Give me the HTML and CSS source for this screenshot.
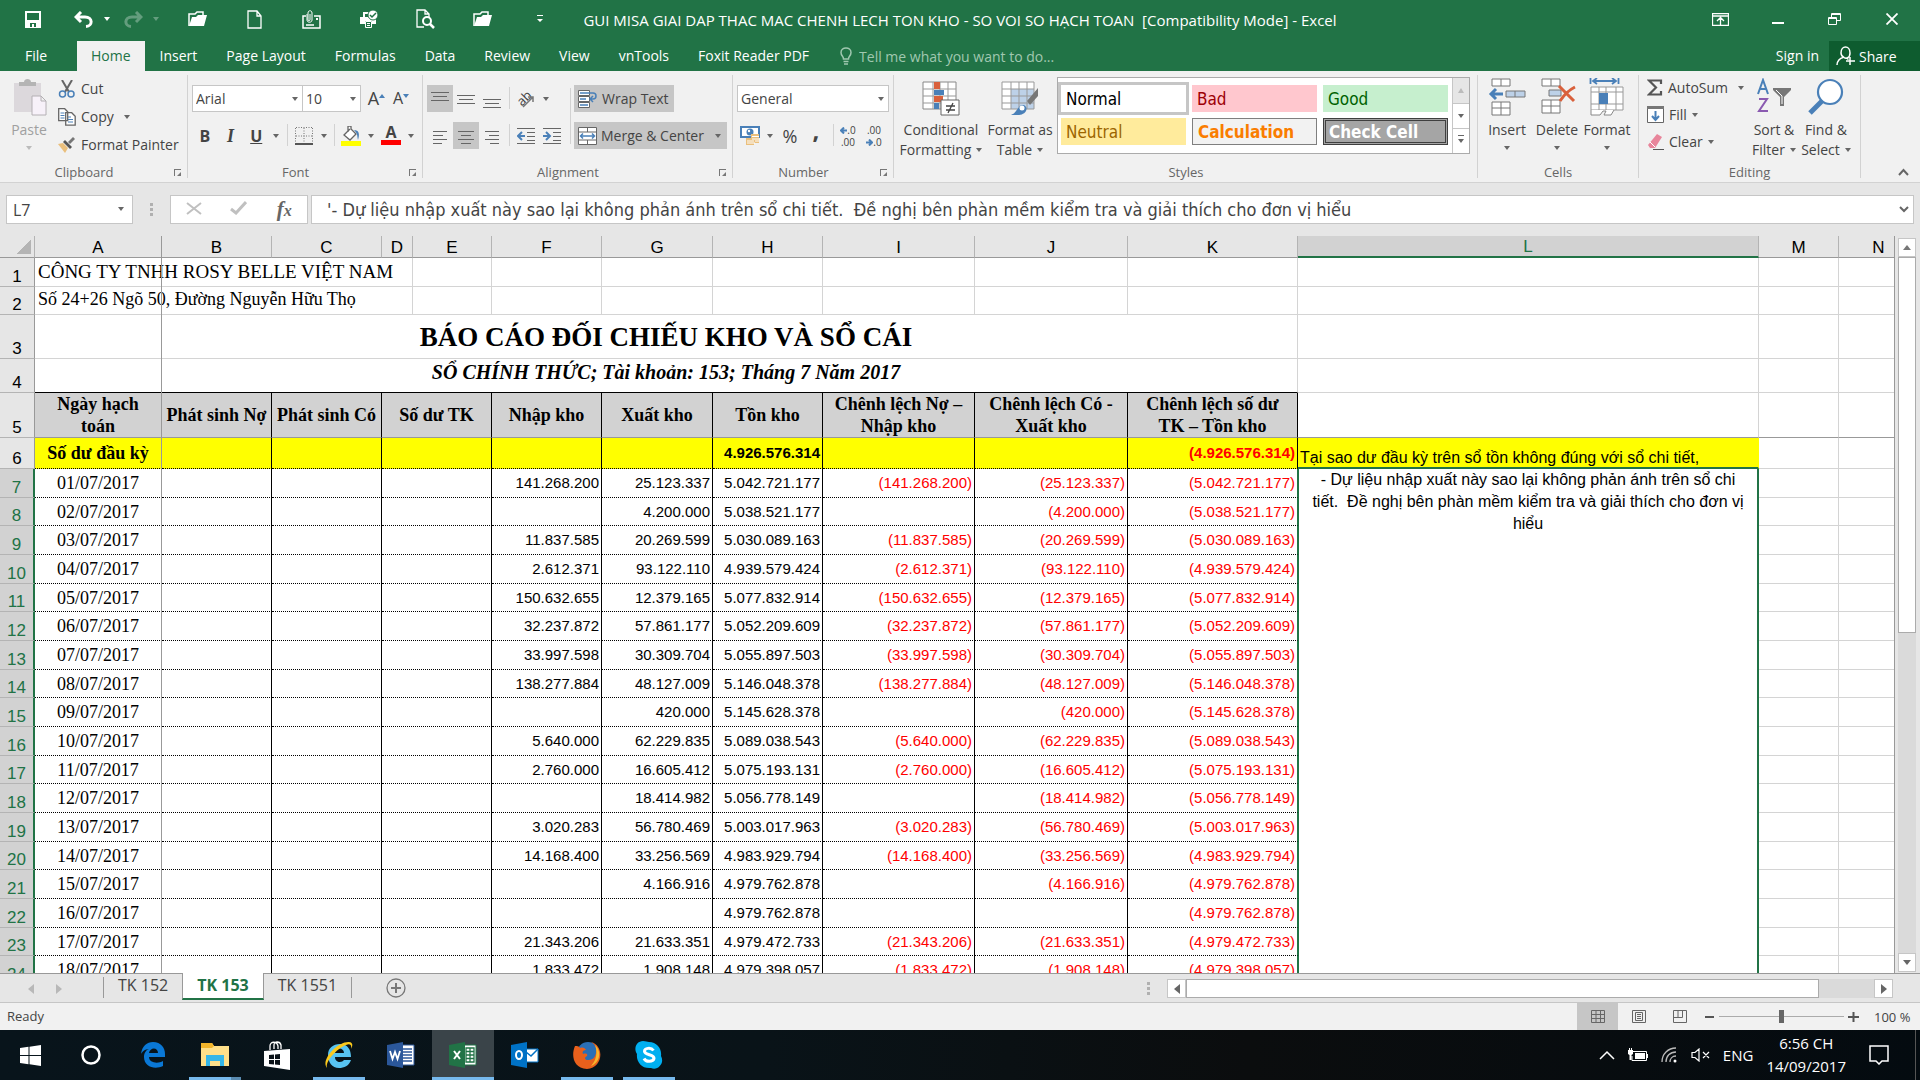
FILE: index.html
```
<!DOCTYPE html>
<html lang="vi">
<head>
	<meta charset="UTF-8">
	<meta name="viewport" content="width=device-width, initial-scale=1.0">
	<title>GUI MISA GIAI DAP THAC MAC CHENH LECH TON KHO - Excel</title>
	<link rel="stylesheet" href="styles.css">
</head>
<body>
	<header class="titlebar">
		<div class="quick">
			<button aria-label="Save"><svg width="16" height="17" viewBox="0 0 16 17"><path d="M1 1h14v15H1z" fill="none" stroke="#fff" stroke-width="2"/><path d="M1 9h14v7H1z" fill="#fff"/><path d="M5 12h6v4H9v-3H7v3H5z" fill="#217346"/></svg></button>
			<button class="wide" aria-label="Undo"><svg width="20" height="17" viewBox="0 0 20 17"><path d="M7 1 2 6l5 5M2 6h9c8 0 8 9 1 9.500" fill="none" stroke="#fff" stroke-width="3"/></svg><i class="caret"></i></button>
			<button class="wide faded" aria-label="Redo"><svg width="20" height="17" viewBox="0 0 20 17"><path d="m13 1 5 5-5 5m5-5H9c-8 0-8 9-1 9.500" fill="none" stroke="#fff" stroke-width="3"/></svg><i class="caret"></i></button>
			<button aria-label="Open"><svg width="19" height="16" viewBox="0 0 19 16"><path d="M1 15V3h6l2-2h6v4" fill="none" stroke="#fff" stroke-width="1.500"/><path d="M4 6h4l2-2h9l-3 11H1z" fill="#fff"/></svg></button>
			<button aria-label="New"><svg width="15" height="19" viewBox="0 0 15 19"><path d="M1 1h9l4 5v12H1zM10 1v5h4" fill="none" stroke="#fff" stroke-width="1.300"/></svg></button>
			<button aria-label="Email"><svg width="19" height="19" viewBox="0 0 19 19"><path d="M4 6H1v12h17V6h-6M4 15h8" fill="none" stroke="#fff" stroke-width="1.500"/><path d="M5 4v6c0 3 5 3 5 0V3c0-3-4-3-4 0v7c0 1 2 1 2 0V4" fill="none" stroke="#fff"/><path d="M14 8h2v2h-2z" fill="#fff"/></svg></button>
			<button aria-label="Quick Print"><svg width="20" height="19" viewBox="0 0 20 19"><path d="M1 7h3V2h6v5h7v7h-4v-3H6v3H1z" fill="#fff"/><path d="M6 4h3v3H6z" fill="#217346"/><circle cx="14" cy="5" r="5" fill="#fff" stroke="#217346"/><path d="m11 5 2 2 4-4" fill="none" stroke="#217346" stroke-width="1.500"/><path d="M6.500 11.500h6v6h-6zM8 13.500h3M8 15.500h3" fill="#217346" stroke="#fff"/></svg></button>
			<button aria-label="Print Preview"><svg width="19" height="20" viewBox="0 0 19 20"><path d="M8 18H1V1h8l4 4v3M9 1v4h4" fill="none" stroke="#fff" stroke-width="1.300"/><circle cx="11" cy="12" r="4" fill="none" stroke="#fff" stroke-width="2"/><path d="m14 15 4 4" stroke="#fff" stroke-width="2.500"/></svg></button>
			<button aria-label="Open Recent"><svg width="19" height="16" viewBox="0 0 19 16"><path d="M1 15V3h6l2-2h6v4" fill="none" stroke="#fff" stroke-width="1.500"/><path d="M4 6h4l2-2h9l-3 11H1z" fill="#fff"/></svg></button>
			<button aria-label="Customize"><svg width="6" height="8" viewBox="0 0 6 8"><path d="M0 0h6v1H0zM0 4h6L3 7z" fill="#fff"/></svg></button>
		</div>
		<h1>GUI MISA GIAI DAP THAC MAC CHENH LECH TON KHO - SO VOI SO HẠCH TOAN&nbsp; [Compatibility Mode] - Excel</h1>
		<div class="winbtns">
			<button aria-label="Ribbon Display Options"><svg width="17" height="13" viewBox="0 0 17 13"><path d="M.5.5h16v12H.500zM0 3h17M8.500 12V5M5 8l3.500-3.500L12 8" fill="none" stroke="#fff" stroke-width="1.300"/></svg></button>
			<button aria-label="Minimize"><svg width="12" height="12"><path d="M0 9h12v2H0z" fill="#fff"/></svg></button>
			<button aria-label="Restore"><svg width="13" height="12" viewBox="0 0 13 12"><path d="M.5 4.500h8v7h-8zM3.500 4V.500h9v7H9M.500 5.500h8M3.500 1.500h9" fill="none" stroke="#fff"/></svg></button>
			<button aria-label="Close"><svg width="12" height="12" viewBox="0 0 12 12"><path d="m.5.5 11 11m0-11-11 11" stroke="#fff" stroke-width="1.800"/></svg></button>
		</div>
	</header>

	<nav class="tabs">
		<a href="#file" class="file">File</a>
		<a href="#home" class="active">Home</a>
		<a href="#insert">Insert</a>
		<a href="#layout">Page Layout</a>
		<a href="#formulas">Formulas</a>
		<a href="#data">Data</a>
		<a href="#review">Review</a>
		<a href="#view">View</a>
		<a href="#vntools">vnTools</a>
		<a href="#foxit">Foxit Reader PDF</a>
		<label class="tellme">
			<svg width="12" height="18" viewBox="0 0 12 18"><path d="M3.500 12c0-3-2.500-3-2.500-6.500C1 2.500 3.500 1 6 1s5 1.500 5 4.500C11 9 8.500 9 8.500 12zM3.500 14.500h5M4 17h4" fill="none" stroke="#a0c8b0" stroke-width="1.500"/></svg>
			<input type="text" placeholder="Tell me what you want to do..." aria-label="Tell me">
		</label>
		<a href="#signin" class="signin">Sign in</a>
		<button class="share"><svg width="19" height="20" viewBox="0 0 19 20"><path d="M1 19c0-4 3-7 6-7.500M5 7c0-8 9-8 9 0 0 5-4 6-6 4.500-2-1-3-2.500-3-4.500M9 12c2 0 2.500.500 3.500 1.500M14 11v8M10 15h9" fill="none" stroke="#fff" stroke-width="1.500"/></svg>Share</button>
	</nav>

	<div class="ribbon">
		<section class="group clipboard">
			<div class="tools">
				<button class="big off">
					<svg width="36" height="38" viewBox="0 0 36 38"><path d="M3 5h27v29H3z" fill="#dcd8dc"/><path d="M8 7V4h5c0-4 7-4 7 0h5v4H8z" fill="#b4b4b4"/><path d="M21 18h9l5 5v14H21zM30 18v5h5" fill="#f7f1f9" stroke="#b4b0b4"/></svg>
					<span>Paste</span><i class="caret"></i>
				</button>
				<div class="stack">
					<button><svg width="18" height="18" viewBox="0 0 18 18"><path d="M4 0l7 12M14 0 7 12" stroke="#666" stroke-width="2"/><circle cx="4.500" cy="14" r="3" fill="none" stroke="#4a80b8" stroke-width="1.500"/><circle cx="13" cy="14" r="3" fill="none" stroke="#4a80b8" stroke-width="1.500"/></svg>Cut</button>
					<button><svg width="18" height="18" viewBox="0 0 18 18"><path d="M.7.7h6l3 3v9h-9zM7.700 4.700h6l3.500 3.500v9H7.700z" fill="#fff" stroke="#666" stroke-width="1.300"/><path d="M2.500 5h4m-4 2.500h4m-4 2.500h4M10 9h3m-3 2.500h5M10 14h5" stroke="#4a80b8"/></svg>Copy<i class="caret"></i></button>
					<button><svg width="18" height="16" viewBox="0 0 18 16"><path d="m0 7 5-1 5 5-3 5z" fill="#eabf7c"/><path d="m5 5 2-2 7 7-2 2z" fill="#555"/><path d="m10 5 5-5 2 2-5 5z" fill="#777"/></svg>Format Painter</button>
				</div>
			</div>
			<h2>Clipboard</h2><button class="launch" aria-label="Clipboard settings"></button>
		</section>

		<section class="group font">
			<div class="tools rows">
				<div class="row">
					<span class="combo family"><select aria-label="Font"><option>Arial</option></select></span>
					<span class="combo size"><select aria-label="Font size"><option>10</option></select></span>
					<button class="ico grow" aria-label="Increase font size">A<svg width="6" height="14"><path d="M0 4h6L3 0z" fill="#4a80b8"/></svg></button>
					<button class="ico grow shrink" aria-label="Decrease font size">A<svg width="6" height="14"><path d="M0 0h6L3 4z" fill="#4a80b8"/></svg></button>
				</div>
				<div class="row">
					<button class="ico bold">B</button>
					<button class="ico ital">I</button>
					<button class="ico under">U</button>
					<i class="caret drop"></i><i class="sep"></i>
					<button class="ico" aria-label="Borders"><svg width="18" height="18" viewBox="0 0 18 18"><path d="M1 .5h16M.500 1v15M17.500 1v15M9 1v15M1 9h16" stroke="#777" stroke-dasharray="1 1.500"/><path d="M0 17h18" stroke="#555" stroke-width="2"/></svg></button>
					<i class="caret drop"></i><i class="sep"></i>
					<button class="ico" aria-label="Fill color"><svg width="20" height="20" viewBox="0 0 20 20"><path d="M9 3 3 9l6 5 6-6-5-5V0H7v6" fill="#fff" stroke="#666" stroke-width="1.300"/><path d="M13 4c5 0 6 4 4 10-1-4 0-6-4-10" fill="#4a80b8"/><path d="M0 15h20v5H0z" fill="#ff0"/></svg></button>
					<i class="caret drop"></i>
					<button class="ico colour" aria-label="Font color">A</button>
					<i class="caret drop"></i>
				</div>
			</div>
			<h2>Font</h2><button class="launch" aria-label="Font settings"></button>
		</section>

		<section class="group align">
			<div class="tools">
				<div class="rows left">
					<div class="row">
						<button class="ico on" aria-label="Top"><svg width="18" height="20"><path d="M0 3.500h18M2 7.500h14M0 11.500h18" stroke="#666"/></svg></button>
						<button class="ico" aria-label="Middle"><svg width="18" height="20"><path d="M0 6.500h18M2 10.500h14M0 14.500h18" stroke="#666"/></svg></button>
						<button class="ico" aria-label="Bottom"><svg width="18" height="20"><path d="M0 10.500h18M2 14.500h14M0 18.500h18" stroke="#666"/></svg></button>
						<i class="sep"></i>
						<button class="ico" aria-label="Orientation"><svg width="20" height="20" viewBox="0 0 20 20"><text x="1" y="14" transform="rotate(-45 8 10)" font-size="13" font-family="Open Sans" fill="#444">ab</text><path d="m7 18 10-10m-5 0h5v5" fill="none" stroke="#777" stroke-width="1.500"/></svg></button>
						<i class="caret drop"></i>
					</div>
					<div class="row">
						<button class="ico" aria-label="Align left"><svg width="14" height="16"><path d="M0 3.500h14M0 7.500h10M0 11.500h14M0 15.500h9" stroke="#666"/></svg></button>
						<button class="ico on" aria-label="Center"><svg width="16" height="16"><path d="M0 3.500h16M3 7.500h10M0 11.500h16M3 15.500h10" stroke="#666"/></svg></button>
						<button class="ico" aria-label="Align right"><svg width="14" height="16"><path d="M0 3.500h14M4 7.500h10M0 11.500h14M5 15.500h9" stroke="#666"/></svg></button>
						<i class="sep"></i>
						<button class="ico" aria-label="Decrease indent"><svg width="18" height="16"><path d="M0 .5h18M10 4.500h8M10 8.500h8M10 12.500h8M0 15.500h18" stroke="#666"/><path d="M8 8H2m3-4L1 8l4 4" fill="none" stroke="#4a80b8" stroke-width="2"/></svg></button>
						<button class="ico" aria-label="Increase indent"><svg width="18" height="16"><path d="M0 .5h18M10 4.500h8M10 8.500h8M10 12.500h8M0 15.500h18" stroke="#666"/><path d="M0 8h6M3 4l4 4-4 4" fill="none" stroke="#4a80b8" stroke-width="2"/></svg></button>
					</div>
				</div>
				<i class="sep tall"></i>
				<div class="rows">
					<button class="pressed wrap"><svg width="20" height="18" viewBox="0 0 20 18"><path d="M.5.500h11v5H.500zM.500 6.500h11v5H.500zM.500 12.500h11v5H.500z" fill="#fff" stroke="#666"/><path d="M2 3h13c4 0 4 6 0 6h-3m3-3-3 3 3 3M2 9h6m-6 6h8" fill="none" stroke="#4a80b8" stroke-width="1.500"/></svg>Wrap Text</button>
					<button class="pressed"><svg width="19" height="18" viewBox="0 0 19 18"><path d="M.5.500h18v17H.500zM.500 5h18M.500 13h18M9.500 0v5M9.500 13v5" fill="#fff" stroke="#666"/><path d="M3 9h13M5 6.500 2.500 9 5 11.500m9-5L16.500 9 14 11.500" fill="none" stroke="#4a80b8" stroke-width="1.500"/></svg>Merge &amp; Center<i class="caret"></i></button>
				</div>
			</div>
			<h2>Alignment</h2><button class="launch" aria-label="Alignment settings"></button>
		</section>

		<section class="group number">
			<div class="tools rows">
				<span class="combo"><select aria-label="Number format"><option>General</option></select></span>
				<div class="row">
					<button class="ico" aria-label="Accounting format"><svg width="20" height="19" viewBox="0 0 20 19"><path d="M0 0h20v12H0z" fill="#4a80b8"/><path d="M2 2h16v8H2z" fill="#fff"/><circle cx="10" cy="6" r="3.500" fill="#4a80b8"/><circle cx="9" cy="5" r="1.200" fill="#fff"/><path d="M11 8h8v9h-5v2H6v-7h5z" fill="#eabf7c"/><path d="M12 10.500h7m-7 2.500h7m-12 2h7m5 0h-4m-8 2h8" stroke="#fff"/></svg></button>
					<i class="caret drop"></i>
					<button class="ico pct">%</button>
					<button class="ico comma">,</button>
					<i class="sep"></i>
					<button class="ico dec"><span><svg width="7" height="7"><path d="M7 3.500H2M4 .500l-3 3 3 3" fill="none" stroke="#4a80b8" stroke-width="2"/></svg>.0</span><span>.00</span></button>
					<button class="ico dec"><span>.00</span><span><svg width="7" height="7"><path d="M0 3.500h5M3 .500l3 3-3 3" fill="none" stroke="#4a80b8" stroke-width="2"/></svg>.0</span></button>
				</div>
			</div>
			<h2>Number</h2><button class="launch" aria-label="Number settings"></button>
		</section>

		<section class="group styles">
			<div class="tools">
				<button class="big cond">
					<svg width="38" height="38" viewBox="0 0 38 38"><path d="M1 4h33v27H1z" fill="#fff" stroke="#888"/><path d="M1 11h33M1 18h33M1 25h33M11 4v27M18 4v27M26 4v27" stroke="#999"/><path d="M12 4h6v7h-6zM12 18h9v6h-9z" fill="#d9603b"/><path d="M12 12h10v5H12zM12 25h5v6h-5z" fill="#4a80b8"/><path d="M19 22h18v15H19z" fill="#fff" stroke="#666"/><path d="M24 28h9m-9 4h9m-2-7-5 10" stroke="#444" stroke-width="1.300"/></svg>
					<span>Conditional<br>Formatting<i class="caret"></i></span>
				</button>
				<button class="big astable">
					<svg width="38" height="38" viewBox="0 0 38 38"><path d="M1 4h32v27H1z" fill="#fff"/><path d="M10 11h23v20H10z" fill="#bdd1e8"/><path d="M1 4h32v27H1zM1 11h32M1 18h32M1 25h32M10 4v27M18 4v27M26 4v27" fill="none" stroke="#999"/><path d="M37 10v8l-8 9-3-4z" fill="#777"/><path d="M10 37c5-2 5-5 9-9 4-3 8 1 6 5-3 5-9 4-15 4" fill="#4a80b8"/><circle cx="21" cy="30" r="2.500" fill="#fff"/></svg>
					<span>Format as<br>Table<i class="caret"></i></span>
				</button>
				<div class="gallery">
					<div class="swatches">
						<button class="normal">Normal</button>
						<button class="bad">Bad</button>
						<button class="good">Good</button>
						<button class="neutral">Neutral</button>
						<button class="calc">Calculation</button>
						<button class="check">Check Cell</button>
					</div>
					<div class="spin">
						<button class="dim" aria-label="Up"><i class="caret up"></i></button>
						<button aria-label="Down"><i class="caret"></i></button>
						<button aria-label="More"><i class="caret more"></i></button>
					</div>
				</div>
			</div>
			<h2>Styles</h2>
		</section>

		<section class="group cells">
			<div class="tools">
				<button class="big">
					<svg width="38" height="38" viewBox="0 0 38 38"><path d="M4 1h18v7H4zM13 1v7M4 24h18v13H4zM13 24v13M4 30h18" fill="#fff" stroke="#777"/><path d="M18 13h19v6H18zM27 13v6" fill="#bdd1e8" stroke="#777"/><path d="M15 16H3m5-5-5 5 5 5" fill="none" stroke="#4a80b8" stroke-width="3"/></svg>
					<span>Insert</span><i class="caret"></i>
				</button>
				<button class="big">
					<svg width="38" height="38" viewBox="0 0 38 38"><path d="M4 1h18v7H4zM13 1v7M4 22h18v13H4zM13 22v13M4 28h18" fill="#fff" stroke="#777"/><path d="M11 12h12v6H11z" fill="#bdd1e8" stroke="#777"/><path d="M21 8c4 4 9 9 15 15M37 9c-6 3-11 8-15 14" fill="none" stroke="#d9603b" stroke-width="3"/></svg>
					<span>Delete</span><i class="caret"></i>
				</button>
				<button class="big">
					<svg width="38" height="38" viewBox="0 0 38 38"><path d="M2.500 0v6M30.500 0v6M5 3h23M9 0 5 3l4 3M24 0l4 3-4 3" fill="none" stroke="#4a80b8" stroke-width="1.800"/><path d="M3 9h32v23H3zM3 14h32M3 26h32M11 9v23M18 9v23M28 9v23" fill="#fff" stroke="#999"/><path d="M11 15h9v11h-9z" fill="#4a80b8"/><path d="M3 32v5h9l3-4h3l-2 4h7l3-5" fill="#fff" stroke="#888"/></svg>
					<span>Format</span><i class="caret"></i>
				</button>
			</div>
			<h2>Cells</h2>
		</section>

		<section class="group editing">
			<div class="tools">
				<div class="stack">
					<button class="sum"><svg width="16" height="17" viewBox="0 0 16 17"><path d="M14 5V1.500H2L9 8.500 2 15.500h12V12" fill="none" stroke="#555" stroke-width="2.200"/></svg>AutoSum<i class="caret"></i></button>
					<button><svg width="17" height="17" viewBox="0 0 17 17"><path d="M.5.500h16v16H.500z" fill="#fff" stroke="#666"/><path d="M0 0h17v3H0z" fill="#777"/><path d="M8.500 5v9M5 10l3.500 4 3.500-4" fill="none" stroke="#4a80b8" stroke-width="2"/></svg>Fill<i class="caret"></i></button>
					<button><svg width="17" height="17" viewBox="0 0 17 17"><path d="m1 12 9-11 5 3-7 11H3z" fill="#e8859b"/><path d="m3 9 5 5" stroke="#fff"/><path d="M6 16.500h11" stroke="#555"/></svg>Clear<i class="caret"></i></button>
				</div>
				<button class="big">
					<svg width="36" height="38" viewBox="0 0 36 38"><path d="m2 16 5-14 5 14M4 11h6" fill="none" stroke="#4a80b8" stroke-width="2"/><path d="M3 21h8L3 33h9" fill="none" stroke="#8a5ab0" stroke-width="2"/><path d="M17 10h18v2l-7 7v9h-4v-9l-7-7z" fill="#777"/><path d="m20 12 6 6v8" fill="none" stroke="#fff"/></svg>
					<span>Sort &amp;<br>Filter<i class="caret"></i></span>
				</button>
				<button class="big find">
					<svg width="36" height="38" viewBox="0 0 36 38"><path d="M2 35 14 23" stroke="#4a80b8" stroke-width="5"/><circle cx="22" cy="14" r="12" fill="#fff" stroke="#4a80b8" stroke-width="2.200"/></svg>
					<span>Find &amp;<br>Select<i class="caret"></i></span>
				</button>
			</div>
			<h2>Editing</h2>
		</section>
		<button class="collapse" aria-label="Collapse ribbon"><svg width="11" height="8"><path d="m1 7 4.500-5L10 7" fill="none" stroke="#666" stroke-width="2"/></svg></button>
	</div>

	<div class="formula">
		<span class="combo namebox"><input type="text" value="L7" aria-label="Name box"></span>
		<i class="dots"></i>
		<div class="fxbtns">
			<button aria-label="Cancel"><svg width="16" height="13" viewBox="0 0 16 13"><path d="m1 1 14 11M15 1 1 12" stroke="#c0c0c0" stroke-width="2"/></svg></button>
			<button aria-label="Enter"><svg width="17" height="14" viewBox="0 0 17 14"><path d="m1 8 5 4L16 1" fill="none" stroke="#c0c0c0" stroke-width="3"/></svg></button>
			<button class="fx">f<small>x</small></button>
		</div>
		<div class="content">
			<input type="text" value="'- Dự liệu nhập xuất này sao lại không phản ánh trên sổ chi tiết.  Đề nghị bên phàn mềm kiểm tra và giải thích cho đơn vị hiểu" aria-label="Formula">
			<svg width="10" height="7"><path d="m1 1 4 4 4-4" fill="none" stroke="#666" stroke-width="2"/></svg>
		</div>
	</div>

	<main class="book">
		<div class="grid">
			<table>
				<colgroup>
					<col class="w-head"><col class="w-a"><col class="w-std"><col class="w-std"><col class="w-d"><col class="w-e"><col class="w-std"><col class="w-g"><col class="w-std"><col class="w-i"><col class="w-j"><col class="w-k"><col class="w-l"><col class="w-m"><col>
				</colgroup>
				<thead>
					<tr><th class="corner"></th><th>A</th><th>B</th><th>C</th><th>D</th><th>E</th><th>F</th><th>G</th><th>H</th><th>I</th><th>J</th><th>K</th><th class="sel">L</th><th>M</th><th class="last">N</th></tr>
				</thead>
				<tbody>
					<tr class="r1"><th>1</th><td colspan="4" class="company">CÔNG TY TNHH ROSY BELLE VIỆT NAM</td><td></td><td></td><td></td><td></td><td></td><td></td><td></td><td></td><td></td><td></td></tr>
					<tr class="r2"><th>2</th><td colspan="4" class="address">Số 24+26 Ngõ 50, Đường Nguyễn Hữu Thọ</td><td></td><td></td><td></td><td></td><td></td><td></td><td></td><td></td><td></td><td></td></tr>
					<tr class="r3"><th>3</th><td colspan="11" class="title">BÁO CÁO ĐỐI CHIẾU KHO VÀ SỔ CÁI</td><td></td><td></td><td></td></tr>
					<tr class="r4"><th>4</th><td colspan="11" class="subtitle">SỔ CHÍNH THỨC; Tài khoản: 153; Tháng 7 Năm 2017</td><td></td><td></td><td></td></tr>
					<tr class="r5"><th>5</th><td>Ngày hạch toán</td><td>Phát sinh Nợ</td><td>Phát sinh Có</td><td colspan="2">Số dư TK</td><td>Nhập kho</td><td>Xuất kho</td><td>Tồn kho</td><td>Chênh lệch Nợ –<br>Nhập kho</td><td>Chênh lệch Có -<br>Xuất kho</td><td>Chênh lệch số dư<br>TK – Tồn kho</td><td></td><td></td><td></td></tr>
					<tr class="r6 day"><th>6</th><td>Số dư đầu kỳ</td><td></td><td></td><td colspan="2"></td><td></td><td></td><td>4.926.576.314</td><td></td><td></td><td>(4.926.576.314)</td><td class="ask">Tại sao dư đầu kỳ trên sổ tồn không đúng với sổ chi tiết,</td><td class="out"></td><td class="out"></td></tr>
					<tr class="day"><th>7</th><td>01/07/2017</td><td></td><td></td><td colspan="2"></td><td>141.268.200</td><td>25.123.337</td><td>5.042.721.177</td><td>(141.268.200)</td><td>(25.123.337)</td><td>(5.042.721.177)</td><td rowspan="18" class="note">- Dự liệu nhập xuất này sao lại không phản ánh trên sổ chi<br>tiết.&nbsp; Đề nghị bên phàn mềm kiểm tra và giải thích cho đơn vị<br>hiểu</td><td class="out"></td><td class="out"></td></tr>
					<tr class="day"><th>8</th><td>02/07/2017</td><td></td><td></td><td colspan="2"></td><td></td><td>4.200.000</td><td>5.038.521.177</td><td></td><td>(4.200.000)</td><td>(5.038.521.177)</td><td class="out"></td><td class="out"></td></tr>
					<tr class="day"><th>9</th><td>03/07/2017</td><td></td><td></td><td colspan="2"></td><td>11.837.585</td><td>20.269.599</td><td>5.030.089.163</td><td>(11.837.585)</td><td>(20.269.599)</td><td>(5.030.089.163)</td><td class="out"></td><td class="out"></td></tr>
					<tr class="day"><th>10</th><td>04/07/2017</td><td></td><td></td><td colspan="2"></td><td>2.612.371</td><td>93.122.110</td><td>4.939.579.424</td><td>(2.612.371)</td><td>(93.122.110)</td><td>(4.939.579.424)</td><td class="out"></td><td class="out"></td></tr>
					<tr class="day"><th>11</th><td>05/07/2017</td><td></td><td></td><td colspan="2"></td><td>150.632.655</td><td>12.379.165</td><td>5.077.832.914</td><td>(150.632.655)</td><td>(12.379.165)</td><td>(5.077.832.914)</td><td class="out"></td><td class="out"></td></tr>
					<tr class="day"><th>12</th><td>06/07/2017</td><td></td><td></td><td colspan="2"></td><td>32.237.872</td><td>57.861.177</td><td>5.052.209.609</td><td>(32.237.872)</td><td>(57.861.177)</td><td>(5.052.209.609)</td><td class="out"></td><td class="out"></td></tr>
					<tr class="day"><th>13</th><td>07/07/2017</td><td></td><td></td><td colspan="2"></td><td>33.997.598</td><td>30.309.704</td><td>5.055.897.503</td><td>(33.997.598)</td><td>(30.309.704)</td><td>(5.055.897.503)</td><td class="out"></td><td class="out"></td></tr>
					<tr class="day"><th>14</th><td>08/07/2017</td><td></td><td></td><td colspan="2"></td><td>138.277.884</td><td>48.127.009</td><td>5.146.048.378</td><td>(138.277.884)</td><td>(48.127.009)</td><td>(5.146.048.378)</td><td class="out"></td><td class="out"></td></tr>
					<tr class="day"><th>15</th><td>09/07/2017</td><td></td><td></td><td colspan="2"></td><td></td><td>420.000</td><td>5.145.628.378</td><td></td><td>(420.000)</td><td>(5.145.628.378)</td><td class="out"></td><td class="out"></td></tr>
					<tr class="day"><th>16</th><td>10/07/2017</td><td></td><td></td><td colspan="2"></td><td>5.640.000</td><td>62.229.835</td><td>5.089.038.543</td><td>(5.640.000)</td><td>(62.229.835)</td><td>(5.089.038.543)</td><td class="out"></td><td class="out"></td></tr>
					<tr class="day"><th>17</th><td>11/07/2017</td><td></td><td></td><td colspan="2"></td><td>2.760.000</td><td>16.605.412</td><td>5.075.193.131</td><td>(2.760.000)</td><td>(16.605.412)</td><td>(5.075.193.131)</td><td class="out"></td><td class="out"></td></tr>
					<tr class="day"><th>18</th><td>12/07/2017</td><td></td><td></td><td colspan="2"></td><td></td><td>18.414.982</td><td>5.056.778.149</td><td></td><td>(18.414.982)</td><td>(5.056.778.149)</td><td class="out"></td><td class="out"></td></tr>
					<tr class="day"><th>19</th><td>13/07/2017</td><td></td><td></td><td colspan="2"></td><td>3.020.283</td><td>56.780.469</td><td>5.003.017.963</td><td>(3.020.283)</td><td>(56.780.469)</td><td>(5.003.017.963)</td><td class="out"></td><td class="out"></td></tr>
					<tr class="day"><th>20</th><td>14/07/2017</td><td></td><td></td><td colspan="2"></td><td>14.168.400</td><td>33.256.569</td><td>4.983.929.794</td><td>(14.168.400)</td><td>(33.256.569)</td><td>(4.983.929.794)</td><td class="out"></td><td class="out"></td></tr>
					<tr class="day"><th>21</th><td>15/07/2017</td><td></td><td></td><td colspan="2"></td><td></td><td>4.166.916</td><td>4.979.762.878</td><td></td><td>(4.166.916)</td><td>(4.979.762.878)</td><td class="out"></td><td class="out"></td></tr>
					<tr class="day"><th>22</th><td>16/07/2017</td><td></td><td></td><td colspan="2"></td><td></td><td></td><td>4.979.762.878</td><td></td><td></td><td>(4.979.762.878)</td><td class="out"></td><td class="out"></td></tr>
					<tr class="day"><th>23</th><td>17/07/2017</td><td></td><td></td><td colspan="2"></td><td>21.343.206</td><td>21.633.351</td><td>4.979.472.733</td><td>(21.343.206)</td><td>(21.633.351)</td><td>(4.979.472.733)</td><td class="out"></td><td class="out"></td></tr>
					<tr class="day"><th>24</th><td>18/07/2017</td><td></td><td></td><td colspan="2"></td><td>1.833.472</td><td>1.908.148</td><td>4.979.398.057</td><td>(1.833.472)</td><td>(1.908.148)</td><td>(4.979.398.057)</td><td class="out"></td><td class="out"></td></tr>
				</tbody>
			</table>
			<i class="freeze"></i>
		</div>
		<div class="vscroll">
			<button aria-label="Scroll up"><i class="caret up"></i></button>
			<div class="track"><div class="thumb"></div></div>
			<button aria-label="Scroll down"><i class="caret"></i></button>
		</div>
	</main>

	<div class="sheets">
		<button class="nav" aria-label="Previous sheets"><svg width="6" height="10"><path d="M6 0v10L0 5z" fill="#b8b8b8"/></svg></button>
		<button class="nav" aria-label="Next sheets"><svg width="6" height="10"><path d="M0 0v10l6-5z" fill="#b8b8b8"/></svg></button>
		<a href="#tk152" class="first">TK 152</a>
		<a href="#tk153" class="active">TK 153</a>
		<a href="#tk1551" class="end">TK 1551</a>
		<button class="add" aria-label="New sheet"><svg width="20" height="20" viewBox="0 0 20 20"><circle cx="10" cy="10" r="9" fill="none" stroke="#777" stroke-width="1.300"/><path d="M5 10h10M10 5v10" stroke="#777" stroke-width="2"/></svg></button>
		<i class="dots"></i>
		<div class="hscroll">
			<button aria-label="Scroll left"><svg width="6" height="10"><path d="M6 0v10L0 5z" fill="#666"/></svg></button>
			<div class="track"><div class="thumb"></div></div>
			<button aria-label="Scroll right"><svg width="6" height="10"><path d="M0 0v10l6-5z" fill="#666"/></svg></button>
		</div>
	</div>

	<div class="status">
		<span class="ready">Ready</span>
		<button class="on" aria-label="Normal view"><svg width="14" height="13"><path d="M.5.500h13v12H.500zM.500 4.500h13M.500 8.500h13M5 0v13M9.500 0v13" fill="none" stroke="#666"/></svg></button>
		<button aria-label="Page layout view"><svg width="14" height="13"><path d="M.5.500h13v12H.500zM3.500 2.500h7v8h-7zM5 4.500h4m-4 2h4m-4 2h4" fill="none" stroke="#666"/></svg></button>
		<button aria-label="Page break view"><svg width="14" height="13"><path d="M.5.500h13v12H.500zM.500 7.500h9V.500M5 0v7" fill="none" stroke="#666"/></svg></button>
		<div class="zoom">
			<button aria-label="Zoom out"><svg width="10" height="10"><path d="M0 4h9v2H0z" fill="#555"/></svg></button>
			<input type="range" min="0" max="100" value="50" aria-label="Zoom">
			<button aria-label="Zoom in"><svg width="12" height="12"><path d="M0 5h11v2H0zM4.500 1h2v10h-2z" fill="#555"/></svg></button>
			<span>100 %</span>
		</div>
	</div>

	<footer class="taskbar">
		<button class="start" aria-label="Start"><svg width="21" height="21" viewBox="0 0 21 21"><path d="m0 3 8.500-1.200V10H0zM9.500 1.700 21 0v10H9.500zM0 11h8.500v8.200L0 18zM9.500 11H21v10L9.500 19.300z" fill="#fff"/></svg></button>
		<button aria-label="Cortana"><svg width="20" height="20"><circle cx="10" cy="10" r="8.500" fill="none" stroke="#fff" stroke-width="2.500"/></svg></button>
		<button aria-label="Edge"><svg width="26" height="26" viewBox="0 0 26 26"><path d="M1 12C2 4 7 0 13 0c8 0 12 6 12 12v3H9c0 6 9 7 14 4v5c-8 4-19 1-19-9 0-4 2-7 5-8-4 0-7 3-8 5m8-1h9c0-6-8-6-9 0" fill="#0a78d6"/></svg></button>
		<button class="open stacked" aria-label="File Explorer"><svg width="28" height="24" viewBox="0 0 28 24"><path d="M0 0h11l2 3h15v20H0z" fill="#ffe08a"/><path d="M0 0h11l2 3-2 2H0z" fill="#f3b52b"/><path d="M5 12h18v11h-4v-5H9v5H5z" fill="#35b6e8"/></svg></button>
		<button aria-label="Store"><svg width="26" height="29" viewBox="0 0 26 29"><path d="M6 9V5c0-5 7-5 8 0v3M10 8V4c0-4 6-4 7 0v4" fill="none" stroke="#fff" stroke-width="1.300"/><path d="m0 10 26-2v21L0 25z" fill="#fff"/><path d="m5 14 5-.5V18H5zM11 13.500l5-.5v5h-5zM5 19h5v4.500L5 23zM11 19h5v5l-5-.500z" fill="#0a1218"/></svg></button>
		<button class="open" aria-label="Internet Explorer"><svg width="30" height="28" viewBox="0 0 30 28"><path d="M4 14C4 7 9 3 16 3c8 0 11 6 11 13H11c0 6 7 6 9 3h7c-2 6-7 8-12 8C8 27 4 21 4 14m7-2h9c0-6-9-6-9 0" fill="#57c4f2"/><path d="M3 27C-4 19 14 0 25 1c4 0 4 4 2 7 1-4-1-6-5-4C12 8 1 21 3 27" fill="#fbc91c"/></svg></button>
		<button aria-label="Word"><svg width="28" height="26" viewBox="0 0 28 26"><path d="M15 3h12v20H15z" fill="#fff" stroke="#2b579a"/><path d="M16 7h9m-9 3h9m-9 3h9m-9 3h9m-9 3h9" stroke="#2b579a" stroke-width="1.500"/><path d="m0 3 16-3v26L0 23z" fill="#2b579a"/><path d="m3 9 2.500 8L8 10l2.500 7L13 9" fill="none" stroke="#fff" stroke-width="1.800"/></svg></button>
		<button class="open current" aria-label="Excel"><svg width="28" height="26" viewBox="0 0 28 26"><path d="M15 3h12v20H15z" fill="#fff" stroke="#217346"/><path d="M17 6h8v14h-8zM21 6v14M17 9.500h8M17 13h8M17 16.500h8" fill="none" stroke="#217346" stroke-width="1.300"/><path d="m0 3 16-3v26L0 23z" fill="#217346"/><path d="m5 9 6 8m0-8-6 8" stroke="#fff" stroke-width="2"/></svg></button>
		<button aria-label="Outlook"><svg width="28" height="26" viewBox="0 0 28 26"><path d="M14 7h13v13H14z" fill="#fff" stroke="#0072c6"/><path d="m15 10 5 4 7-7" fill="none" stroke="#0072c6" stroke-width="1.500"/><path d="m0 3 16-3v26L0 23z" fill="#0072c6"/><ellipse cx="8" cy="13" rx="3" ry="4" fill="none" stroke="#fff" stroke-width="2"/></svg></button>
		<button class="open" aria-label="Firefox"><svg width="28" height="28" viewBox="0 0 28 28"><circle cx="15" cy="12" r="11" fill="#2b6fb6"/><path d="M2 5c2 0 4 0 5 2 3-1 5 0 6 2-3 0-4 2-3 4 3-1 5 0 4 2-2 1-3 3 0 4 7 1 10-5 9-12-1-3-3-5-5-6 14 4 12 26-4 27C0 27-2 14 2 5" fill="#e8601c"/><path d="M22 4c7 6 5 18-4 21 5-5 7-13 4-21" fill="#f9b62b"/></svg></button>
		<button class="open" aria-label="Skype"><svg width="28" height="28" viewBox="0 0 28 28"><path d="M8 0c3 0 4 1 6 1 8 0 13 7 12 14 4 7-3 15-10 12C7 28 1 21 2 13-2 7 2 0 8 0" fill="#00aff0"/><path d="M18.500 9.500C16 6 9 7 9.500 10.500c.500 4 10 2.500 9.500 7C18 21 11 21.500 9 17.500" fill="none" stroke="#fff" stroke-width="3"/></svg></button>
		<div class="tray">
			<svg width="16" height="10"><path d="m1 9 7-7 7 7" fill="none" stroke="#fff" stroke-width="1.500"/></svg>
			<svg width="20" height="14" viewBox="0 0 20 14"><path d="M5 3.500h13.500v9H4V8" fill="none" stroke="#fff"/><path d="M7 5h10v6H7zM19 6h1v4h-1zM0 2h5v4L3.500 7v5h-2V7L0 6zM1 0h1v2H1zM3 0h1v2H3z" fill="#fff"/></svg>
			<svg width="17" height="16" viewBox="0 0 17 16"><path d="M1 15C1 7 7 1 15 1M5 15c0-6 4-10 10-10M9 15c0-3 2-6 6-6" fill="none" stroke="#bbb" stroke-width="1.300"/><circle cx="14" cy="14" r="1.500" fill="#fff"/></svg>
			<svg width="19" height="14" viewBox="0 0 19 14"><path d="M1 4.500h3L8 1v12L4 9.500H1zM12 4l6 6m0-6-6 6" fill="none" stroke="#fff" stroke-width="1.200"/></svg>
			<span>ENG</span>
			<time datetime="2017-09-14T18:56">6:56 CH<br>14/09/2017</time>
			<svg width="20" height="20"><path d="M1 1h18v15h-6l-3 3-3-3H1z" fill="none" stroke="#fff" stroke-width="1.500"/></svg>
			<i class="desk"></i>
		</div>
	</footer>
</body>
</html>
```
FILE: styles.css
```
* {
	box-sizing: border-box;
}
body {
	display: flex;
	flex-direction: column;
	height: 100vh;
	margin: 0;
	overflow: hidden;
	background: #e6e6e6;
	color: #444;
	font: 14px/20px "Open Sans", "Noto Sans", sans-serif;
}
button,
input,
select {
	margin: 0;
	padding: 0;
	border: 0;
	border-radius: 0;
	background: none;
	color: inherit;
	font: inherit;
}
select,
input {
	-webkit-appearance: none;
	appearance: none;
}
a {
	color: inherit;
	text-decoration: none;
}
h1,
h2 {
	margin: 0;
	font-weight: normal;
}
svg {
	flex: none;
}

/* small drop-down triangle */
.caret {
	display: inline-block;
	border: 3px solid transparent;
	border-top: 4px solid #666;
	border-bottom: 0;
}
.caret.up {
	border-top: 0;
	border-bottom: 5px solid #777;
}

/* title bar */
.titlebar {
	display: grid;
	grid-template-columns: 1fr auto 1fr;
	flex: none;
	height: 41px;
	background: #217346;
	color: #fff;
}
.titlebar h1 {
	font-size: 15px;
	line-height: 41px;
}
.quick,
.winbtns {
	display: flex;
	align-items: center;
	height: 38px;
}
.quick {
	padding-left: 4px;
}
.winbtns {
	justify-content: flex-end;
}
.quick button,
.winbtns button {
	display: flex;
	align-items: center;
	justify-content: center;
	gap: 10px;
	width: 57px;
	height: 38px;
}
.quick .wide {
	width: 56px;
	padding-left: 6px;
}
.quick .faded {
	width: 52px;
	padding: 0 4px 0 0;
	opacity: .3;
}
.quick .wide .caret {
	border-top-color: #fff;
}

/* ribbon tabs */
.tabs {
	display: flex;
	flex: none;
	gap: 1px;
	height: 30px;
	background: #217346;
	color: #fff;
	font-size: 14px;
	line-height: 29px;
}
.tabs a {
	padding: 0 14px;
}
.tabs .file {
	width: 76px;
	padding-left: 25px;
}
.tabs .active {
	background: #f1f1f1;
	color: #217346;
}
.tellme {
	display: flex;
	flex: 1;
	align-items: center;
	gap: 7px;
	padding-left: 16px;
}
.tellme input {
	width: 240px;
}
.tellme input::placeholder {
	color: #a0c8b0;
	opacity: 1;
}
.tabs .signin {
	padding: 0 9px;
}
.share {
	display: flex;
	align-items: center;
	gap: 4px;
	width: 91px;
	padding-left: 7px;
	background: #0e5c2f;
}

/* ribbon */
.ribbon {
	display: flex;
	flex: none;
	height: 112px;
	padding: 4px 0;
	border-bottom: 1px solid #d2d2d2;
	background: #f1f1f1;
}
.group {
	display: grid;
	position: relative;
	grid-template-rows: 1fr 12px;
	flex: none;
	padding: 0 4px;
	border-right: 1px solid #d2d2d2;
}
.group h2 {
	color: #666;
	font-size: 13px;
	line-height: 12px;
	text-align: center;
}
.group h2:not(:last-child) {
	padding-right: 19px;
}
.launch {
	position: absolute;
	right: 6px;
	bottom: 2px;
	width: 7px;
	height: 7px;
	border: 1px solid #777;
	border-width: 1px 0 0 1px;
}
.launch::after {
	content: "";
	position: absolute;
	right: 0;
	bottom: 0;
	border: 2px solid #777;
	border-top-color: transparent;
	border-left-color: transparent;
}
.clipboard { width: 188px; }
.font { width: 235px; }
.align { width: 310px; }
.number { width: 161px; }
.styles {
	flex: 1;
	padding-left: 5px;
}
.cells { width: 161px; }
.editing { width: 222px; }
.tools {
	display: flex;
	min-width: 0;
}
.rows {
	display: flex;
	flex-direction: column;
	gap: 10px;
	padding-top: 10px;
}
.row {
	display: flex;
	height: 27px;
}
.rows.left {
	width: 139px;
}
.big {
	display: flex;
	flex-direction: column;
	align-items: center;
	width: 50px;
	padding-top: 3px;
	white-space: nowrap;
}
.big span {
	margin-top: 4px;
}
.big > .caret {
	margin-top: 6px;
}
.big span .caret {
	margin: 0 0 3px 5px;
}
.off {
	color: #a0a0a0;
}
.off .caret {
	border-top-color: #bbb;
}
.cond { width: 84px; }
.astable { width: 74px; }
.find { width: 54px; }
.stack button {
	display: flex;
	align-items: center;
	gap: 5px;
	height: 28px;
	padding-left: 4px;
	white-space: nowrap;
}
.stack .caret {
	margin-left: 5px;
}
.editing .stack {
	width: 106px;
}
.editing .stack button {
	height: 27px;
	padding-bottom: 2px;
}
.editing .stack button:not(.sum) .caret {
	margin-left: 0;
}
.ico {
	display: grid;
	place-items: center;
	width: 26px;
	height: 27px;
}
.on,
.pressed {
	background: #c6c6c6;
}
.drop {
	margin: 12px 4px 0;
}
.sep {
	width: 8px;
	height: 22px;
	margin-top: 2px;
	background: linear-gradient(#d2d2d2, #d2d2d2) center / 1px 100% no-repeat;
}
.sep.tall {
	height: 56px;
	margin-top: 13px;
}
.pressed {
	display: flex;
	align-items: center;
	gap: 4px;
	height: 27px;
	padding: 0 6px 0 4px;
	white-space: nowrap;
}
.pressed .caret {
	margin-left: 7px;
}
.wrap {
	width: 100px;
}
.combo {
	display: block;
	position: relative;
	height: 27px;
	border: 1px solid #c6c6c6;
	background: #fff;
}
.combo::after {
	content: "";
	position: absolute;
	right: 4px;
	top: 11px;
	border: 3px solid transparent;
	border-top: 4px solid #666;
	border-bottom: 0;
}
.combo select,
.combo input {
	width: 100%;
	height: 100%;
	padding-left: 3px;
}
.family { width: 115px; }
.size {
	width: 61px;
	margin-left: -1px;
}
.grow {
	display: flex;
	margin-left: 7px;
	font-size: 18px;
	line-height: 27px;
}
.grow svg {
	margin-top: 5px;
}
.shrink {
	margin-left: 0;
	font-size: 16px;
}
.bold,
.ital,
.under,
.colour {
	font-size: 16px;
	font-weight: bold;
}
.ital {
	font-family: "Liberation Serif", serif;
	font-size: 18px;
	font-style: italic;
}
.under {
	text-decoration: underline;
}
.colour {
	width: 20px;
	height: 23px;
	margin: 0 3px;
	border-bottom: 5px solid #f00;
}
.pct {
	font-size: 18px;
}
.comma {
	padding-bottom: 12px;
	font-size: 24px;
	font-weight: bold;
	line-height: 14px;
}
.dec {
	display: block;
	padding-top: 1px;
	font-size: 10px;
	line-height: 12px;
	text-align: right;
}
.dec span {
	display: block;
	padding-right: 4px;
	white-space: nowrap;
}

/* cell styles gallery */
.gallery {
	display: flex;
	flex: 1;
	height: 77px;
	margin: 2px 3px 0 0;
	border: 1px solid #ababab;
	background: #fff;
}
.swatches {
	display: grid;
	grid-template-columns: repeat(3, 1fr);
	grid-auto-rows: 27px;
	flex: 1;
	gap: 6px;
	padding: 7px 4px 0 3px;
}
.swatches button {
	padding-left: 5px;
	font: 17px/22px "DejaVu Sans Condensed", "DejaVu Sans", sans-serif;
	text-align: left;
}
.swatches .normal {
	color: #000;
	outline: 3px solid #c6c6c6;
}
.bad {
	background: #ffc7ce;
	color: #9c0006;
}
.good {
	background: #c6efce;
	color: #006100;
}
.neutral {
	background: #ffeb9c;
	color: #9c6500;
}
.swatches .calc {
	border: 1px solid #7f7f7f;
	background: #f2f2f2;
	color: #fa7d00;
	font-weight: bold;
}
.swatches .check {
	padding-left: 3px;
	border: 3px double #3f3f3f;
	background: #a5a5a5;
	color: #fff;
	font-weight: bold;
}
.spin {
	display: grid;
	width: 17px;
	border-left: 1px solid #c6c6c6;
}
.spin button {
	display: grid;
	place-items: center;
	border-top: 1px solid #c6c6c6;
}
.spin .dim {
	border-top: 0;
	background: #e6e6e6;
}
.spin .dim .caret {
	border-bottom-color: #bbb;
}
.more {
	position: relative;
}
.more::before {
	content: "";
	position: absolute;
	left: -3px;
	top: -8px;
	width: 6px;
	height: 1px;
	background: #666;
}
.collapse {
	display: flex;
	flex: none;
	align-items: flex-end;
	justify-content: center;
	width: 59px;
	padding: 0 0 2px 26px;
}

/* formula bar */
.formula {
	display: flex;
	flex: none;
	height: 53px;
	padding: 12px 6px;
}
.formula .combo,
.fxbtns,
.content {
	height: 29px;
	border: 1px solid #c6c6c6;
	background: #fff;
}
.formula .namebox {
	width: 127px;
}
.namebox input {
	padding-left: 6px;
	font-size: 16px;
}
.namebox::after {
	right: 8px;
}
.dots {
	width: 3px;
	margin: 8px 17px 0;
	height: 13px;
	background: repeating-linear-gradient(#b0b0b0 0 3px, transparent 3px 5px);
}
.fxbtns {
	display: flex;
	justify-content: space-around;
	width: 138px;
	margin-right: 3px;
}
.fxbtns button {
	width: 45px;
}
.fx {
	color: #666;
	font: italic bold 21px/24px "Liberation Serif", serif;
}
.fx small {
	font-size: 16px;
}
.content {
	display: flex;
	flex: 1;
	align-items: center;
	padding: 0 4px 0 15px;
}
.content input {
	flex: 1;
	height: 27px;
	font: 18px/27px "DejaVu Sans Condensed", "DejaVu Sans", sans-serif;
}

/* worksheet */
.book {
	display: flex;
	flex: 1;
	min-height: 0;
	border-bottom: 1px solid #999;
}
.grid {
	position: relative;
	flex: 1;
	overflow: hidden;
	border-right: 1px solid #999;
}
table {
	width: 100%;
	table-layout: fixed;
	border-spacing: 0;
	background: #fff;
	color: #000;
	font: 15px/18px "Liberation Sans", Arial, sans-serif;
}
.w-head { width: 35px; }
.w-a { width: 127px; }
.w-std { width: 110px; }
.w-d { width: 31px; }
.w-e { width: 79px; }
.w-g { width: 111px; }
.w-i { width: 152px; }
.w-j { width: 153px; }
.w-k { width: 170px; }
.w-l { width: 461px; }
.w-m { width: 80px; }
th,
td {
	padding: 0 2px;
	border: 0 solid #d4d4d4;
	border-width: 0 1px 1px 0;
}
th {
	padding: 0;
	background: #e6e6e6;
	font-size: 17px;
	font-weight: normal;
}
thead th {
	height: 22px;
	padding-top: 2px;
	border-color: #b4b4b4;
	border-bottom-color: #999;
}
.corner {
	background: linear-gradient(135deg, transparent 50%, #b4b4b4 50%) 17px 4px / 14px 14px no-repeat #e6e6e6;
}
thead .sel {
	border-bottom: 2px solid #217346;
	background: #d2d2d2;
	color: #217346;
}
thead .last {
	padding-left: 24px;
}
thead .last,
tbody td:last-child {
	border-right: 0;
}
tbody th {
	border-color: #b4b4b4;
	border-right-color: #999;
	vertical-align: bottom;
}
.r1 { height: 29px; }
.r2 { height: 28px; }
.r3 { height: 44px; }
.r4 { height: 34px; }
.r5 { height: 45px; }
.day { height: 29px; }
.day:nth-child(3n + 2) { height: 28px; }
.r6.day { height: 31px; }

.company,
.address,
.title,
.subtitle,
.r5 td,
.day td:nth-of-type(1) {
	font-family: "Liberation Serif", "Times New Roman", serif;
}
.company,
.address {
	padding-left: 3px;
	font-size: 18px;
	line-height: 24px;
	white-space: nowrap;
}
.company {
	font-size: 19px;
}
.address {
	vertical-align: top;
}
.title {
	font-size: 27px;
	font-weight: bold;
	line-height: 36px;
	text-align: center;
}
.subtitle {
	font-size: 20px;
	font-style: italic;
	font-weight: bold;
	line-height: 26px;
	text-align: center;
	vertical-align: top;
}
.r4 td:nth-of-type(1) {
	border-bottom-color: #000;
}
.r5 td {
	padding: 0;
	border-bottom-color: #999;
	font-size: 18px;
	font-weight: bold;
	line-height: 22px;
	text-align: center;
}
.r5 td:nth-of-type(-n + 10) {
	border-right-color: #000;
	background: #d2d2d2;
}
.r5 td:nth-of-type(1) {
	padding: 0 20px;
}
.day td {
	border-right-color: #000;
	border-bottom: 1px dotted #000;
	text-align: right;
}
.day td:nth-of-type(1) {
	font-size: 18px;
	text-align: center;
}
.day td:nth-of-type(n + 8) {
	color: #f00;
}
.r6 td {
	background: #ff0;
	font-weight: bold;
}
.day td.ask,
.day td.note {
	color: #000;
	font-size: 16px;
}
.day td.ask {
	border-right-color: #ff0;
	border-bottom: 2px solid #217346;
	font-weight: normal;
	text-align: left;
	vertical-align: bottom;
}
/* selected cell: its top edge is the row above, its left edge starts in column K */
.day td.note {
	border: 0 solid #217346;
	border-width: 0 2px 0 1px;
	line-height: 22px;
	text-align: center;
	vertical-align: top;
	white-space: nowrap;
}
.day:not(.r6) td:nth-of-type(10) {
	border-right-color: #217346;
}
.day .out {
	border-color: #d4d4d4;
	border-bottom-style: solid;
	background: #fff;
}
.day:not(.r6) th {
	border-right: 2px solid #217346;
	background: #d2d2d2;
	color: #217346;
}
.freeze {
	position: absolute;
	top: 0;
	bottom: 0;
	left: 161px;
	width: 1px;
	background: #999;
}

/* scroll bars */
.vscroll {
	display: flex;
	flex-direction: column;
	flex: none;
	width: 25px;
	padding: 2px 4px 1px 3px;
}
.vscroll button,
.hscroll button {
	display: grid;
	place-items: center;
	flex: none;
	width: 18px;
	height: 19px;
	border: 1px solid #c6c6c6;
	background: #fff;
}
.vscroll .caret {
	border-width: 5px 4px 0;
}
.vscroll .caret.up {
	border-width: 0 4px 5px;
}
.track {
	flex: 1;
	background: #dadada;
}
.thumb {
	border: 1px solid #ababab;
	background: #fff;
}
.vscroll .thumb {
	height: 54%;
}

/* sheet tabs */
.sheets {
	display: flex;
	flex: none;
	height: 29px;
	padding: 0 27px 0 17px;
	border-bottom: 1px solid #c6c6c6;
	font-size: 16px;
	line-height: 24px;
}
.nav {
	width: 28px;
}
.sheets a {
	padding: 0 14px;
}
.sheets a.first {
	margin-left: 30px;
}
.sheets .first {
	border-left: 1px solid #999;
}
.sheets .end {
	border-right: 1px solid #999;
}
.sheets a.first,
.sheets a.end {
	height: 21px;
	margin-top: 3px;
	line-height: 16px;
}
.sheets .active {
	height: 27px;
	margin-top: -1px;
	border: 0 solid #999;
	border-width: 0 1px 2px;
	border-bottom-color: #217346;
	background: #fff;
	color: #217346;
	font-weight: bold;
}
.add {
	display: grid;
	place-items: center;
	margin: 0 auto 0 34px;
}
.hscroll {
	display: flex;
	width: 726px;
	height: 19px;
	margin-top: 5px;
}
.hscroll button {
	width: 19px;
}
.hscroll .thumb {
	width: 92%;
	height: 100%;
}

/* status bar */
.status {
	display: flex;
	flex: none;
	height: 27px;
	background: #f1f1f1;
	font-size: 13px;
	line-height: 26px;
}
.ready {
	flex: 1;
	padding-left: 7px;
}
.status > button {
	display: grid;
	place-items: center;
	width: 41px;
}
.zoom {
	display: flex;
	align-items: center;
	width: 220px;
	padding-left: 5px;
	white-space: nowrap;
}
.zoom button {
	display: grid;
}
.zoom input {
	width: 125px;
	height: 14px;
	margin: 0 4px;
	background: linear-gradient(#ababab, #ababab) center / 100% 1px no-repeat;
}
.zoom input::-webkit-slider-thumb {
	-webkit-appearance: none;
	width: 5px;
	height: 13px;
	background: #666;
}
.zoom span {
	margin-left: 14px;
}

/* taskbar */
.taskbar {
	display: flex;
	flex: none;
	height: 50px;
	background: linear-gradient(90deg, #08141b, #091318 40%, #0b0d0e 65%, #040b10);
	color: #fff;
}
.taskbar > button {
	display: grid;
	position: relative;
	place-items: center;
	width: 62px;
}
.taskbar .start {
	width: 60px;
}
.open::after {
	content: "";
	position: absolute;
	right: 5px;
	bottom: 0;
	left: 5px;
	height: 3px;
	background: #76b9ed;
}
.stacked::after {
	border-right: 10px solid #5a8bb0;
}
.current {
	background: #3a4449;
}
.current::after {
	right: 0;
	left: 0;
}
.tray {
	display: flex;
	align-items: center;
	gap: 13px;
	margin-left: auto;
	font-size: 15px;
}
.tray time {
	margin-right: 10px;
	line-height: 23px;
	text-align: center;
}
.desk {
	align-self: stretch;
	width: 5px;
	margin-left: 13px;
	border-left: 1px solid #555;
}
```
